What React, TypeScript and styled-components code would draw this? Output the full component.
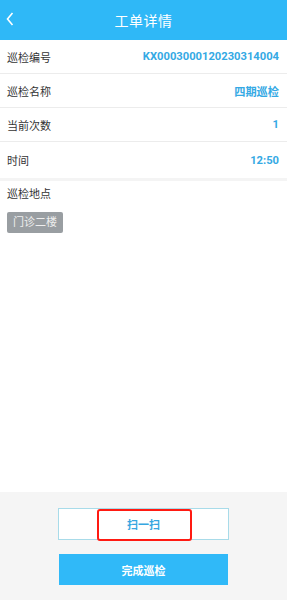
import styled, { createGlobalStyle } from "styled-components";

const GlobalStyle = createGlobalStyle`
  html, body {
    margin: 0;
    padding: 0;
    background: #ffffff;
  }
  body {
    font-family: Roboto, "Noto Sans CJK SC", sans-serif;
  }
`;

const Page = styled.div`
  width: 287px;
  min-height: 600px;
  display: flex;
  flex-direction: column;
  background: #ffffff;
`;

const Header = styled.div`
  height: 40px;
  background: #2fb8f7;
  display: flex;
  align-items: center;
  justify-content: center;
  position: relative;
  color: #ffffff;
  font-size: 14px;
  letter-spacing: 0.5px;
`;

const BackButton = styled.div`
  position: absolute;
  left: 6px;
  top: 11px;
  width: 10px;
  height: 16px;
  display: flex;
  align-items: center;
`;

const Row = styled.div<{ $last?: boolean }>`
  height: ${(p) => (p.$last ? "36px" : "33px")};
  display: flex;
  align-items: center;
  justify-content: space-between;
  padding: 0 8px 0 7px;
  border-bottom: ${(p) => (p.$last ? "3px solid #f4f4f4" : "1px solid #ececec")};
`;

const Label = styled.span`
  font-size: 11px;
  color: #333333;
`;

const Value = styled.span`
  font-size: 11.2px;
  font-weight: 700;
  color: #35a9e4;
`;

const Location = styled.div`
  flex: 1;
  padding: 6px 6px 0 7px;
  display: flex;
  flex-direction: column;
  align-items: flex-start;
  gap: 9px;
`;

const SectionTitle = styled.span`
  font-size: 11px;
  color: #333333;
  line-height: 16px;
`;

const Tag = styled.span`
  background: #999ea2;
  color: #eeeeee;
  font-size: 11px;
  line-height: 21px;
  padding: 0 6px;
  border-radius: 2px;
`;

const Footer = styled.div`
  height: 108px;
  background: #f5f5f5;
  display: flex;
  flex-direction: column;
  align-items: center;
  padding-top: 16px;
  box-sizing: border-box;
  gap: 14px;
`;

const ScanButton = styled.div`
  position: relative;
  width: 171px;
  height: 32px;
  box-sizing: border-box;
  background: #ffffff;
  border: 1px solid #a8dbe9;
  display: flex;
  align-items: center;
  justify-content: center;
  color: #36a6e0;
  font-size: 11px;
  font-weight: 700;
`;

const Highlight = styled.div`
  position: absolute;
  left: 38px;
  top: 0px;
  width: 95px;
  height: 32px;
  box-sizing: border-box;
  border: 2.5px solid #ff1a12;
  border-radius: 3px;
`;

const DoneButton = styled.div`
  width: 169px;
  height: 31px;
  background: #30b9f8;
  display: flex;
  align-items: center;
  justify-content: center;
  color: #ffffff;
  font-size: 11px;
  font-weight: 700;
`;

const rows = [
  { label: "巡检编号", value: "KX0003000120230314004" },
  { label: "巡检名称", value: "四期巡检" },
  { label: "当前次数", value: "1" },
  { label: "时间", value: "12:50" },
];

export default function App() {
  return (
    <Page>
      <GlobalStyle />
      <Header>
        <BackButton>
          <svg width="8" height="14" viewBox="0 0 8 14" fill="none">
            <path d="M6.5 1 L1.5 7 L6.5 13" stroke="#ffffff" strokeWidth="1.6" />
          </svg>
        </BackButton>
        工单详情
      </Header>
      {rows.map((r, i) => (
        <Row key={r.label} $last={i === rows.length - 1}>
          <Label>{r.label}</Label>
          <Value>{r.value}</Value>
        </Row>
      ))}
      <Location>
        <SectionTitle>巡检地点</SectionTitle>
        <Tag>门诊二楼</Tag>
      </Location>
      <Footer>
        <ScanButton>
          扫一扫
          <Highlight />
        </ScanButton>
        <DoneButton>完成巡检</DoneButton>
      </Footer>
    </Page>
  );
}
